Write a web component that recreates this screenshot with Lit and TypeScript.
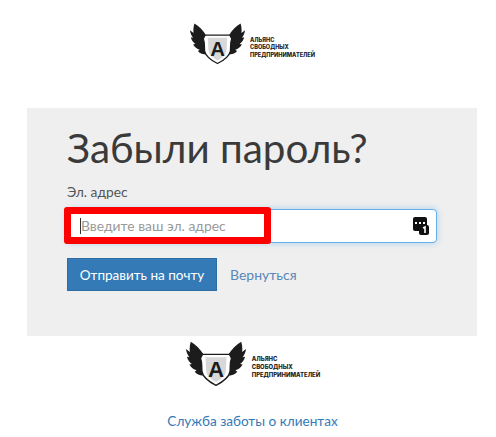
import { LitElement, html, css, svg } from "lit";
import { customElement, property } from "lit/decorators.js";

const wing = svg`
  <path d="M5 0C10 3 15 8 18 13L19 35C15 35 11 34 9 31L11 29.500C8 28.500 5 26.500 3.500 23.500L6 23C3.500 21 1.500 18.500 1 15.500L3.500 16C1.500 13.500 .3 10.500 0 7.500L4 10.500C3.500 7 4 3 5 0Z"/>
`;

@customElement("brand-logo")
class BrandLogo extends LitElement {
  @property({ type: Boolean }) small = false;
  static styles = css`
    :host { display: flex; align-items: flex-start; }
    svg { display: block; }
    .big svg { width: 60px; height: 46px; }
    .small svg { width: 55px; height: 42px; }
    .wrap { display: flex; align-items: flex-start; }
    .names { font-family: "Inter", "Liberation Sans", sans-serif; font-weight: 800; color: #222; white-space: nowrap; }
    .big .names { font-size: 5.900px; line-height: 8px; margin-left: 6px; margin-top: 14px; }
    .small .names { font-size: 5.600px; line-height: 7.300px; margin-left: 5px; margin-top: 14px; }
  `;
  render() {
    return html`<div class="wrap ${this.small ? "small" : "big"}">
      <svg viewBox="0 0 62 46">
        <g fill="#1c1c1c">
          ${wing}
          <g transform="translate(62 0) scale(-1 1)">${wing}</g>
        </g>
        <path d="M17 13H45L47 17C45 22 46 27 45.500 31C44 38 37 42 31 45C25 42 18 38 16.500 31C16 27 17 22 15 17Z" fill="#fff" stroke="#1c1c1c" stroke-width="1.400"/>
        <path d="M20 16H42C41 24 42 30 40 34C38 37 34 40 31 41.500C28 40 24 37 22 34C20 30 21 24 20 16Z" fill="#d8d8d8"/>
        <text x="31" y="36" text-anchor="middle" font-family="Liberation Sans, sans-serif" font-weight="700" font-size="23" fill="#1c1c1c">A</text>
      </svg>
      <div class="names">АЛЬЯНС<br />СВОБОДНЫХ<br />ПРЕДПРИНИМАТЕЛЕЙ</div>
    </div>`;
  }
}

@customElement("app-root")
export class AppRoot extends LitElement {
  static styles = css`
    :host { display: block; width: 496px; height: 437px; overflow: hidden; background: #fff;
      font-family: "Lato", "Liberation Sans", sans-serif; color: #333; }
    .top { display: flex; justify-content: center; padding: 23px 0 0 9px; height: 108px; box-sizing: border-box; }
    .panel { margin: 0 19px 0 27px; height: 228px; box-sizing: border-box; background: #efefef; padding: 19px 40px 0; }
    h1 { margin: 0; font-size: 40.400px; line-height: 42px; font-weight: 400; color: #3a3a3a; white-space: nowrap; }
    label { display: block; margin-top: 14px; font-size: 13.800px; line-height: 18px; color: #555; }
    .field { position: relative; margin-top: 8px; width: 370px; height: 34px; box-sizing: border-box; background: #fff;
      border: 1px solid #66afe9; border-radius: 4px; box-shadow: 0 0 6px rgba(102,175,233,.5); display: flex; align-items: center; justify-content: flex-end; padding-right: 6px; }
    .mark { position: absolute; left: -4px; top: -3px; width: 207px; height: 37px; box-sizing: border-box;
      border: 7px solid #f00; border-radius: 3px; display: flex; align-items: center; padding-left: 9px;
      font-size: 13.900px; color: #999; white-space: nowrap; }
    .caret { width: 1px; height: 16px; background: #333; }
    .actions { display: flex; align-items: center; margin-top: 15px; gap: 13px; }
    button { width: 150px; height: 33px; box-sizing: border-box; background: #337ab7; border: 1px solid #2e6da4; color: #fff;
      font: 13.500px "Lato", "Liberation Sans", sans-serif; padding: 0; }
    a { color: #5a88b8; font-size: 14px; text-decoration: none; }
    .bottom { display: flex; justify-content: center; padding: 5px 0 0 10px; }
    .care { text-align: center; margin-top: 23px; padding-left: 9px; }
    .care a { color: #337ab7; font-size: 13.600px; }
  `;
  render() {
    return html`
      <div class="top"><brand-logo small></brand-logo></div>
      <div class="panel">
        <h1>Забыли пароль?</h1>
        <label>Эл. адрес</label>
        <div class="field">
          <div class="mark"><span class="caret"></span>Введите ваш эл. адрес</div>
          <svg width="18" height="20" viewBox="0 0 18 20">
            <rect x="1" y="1" width="14" height="14" rx="2" fill="#111"/>
            <rect x="3" y="6" width="2" height="2" fill="#fff"/><rect x="7" y="6" width="2" height="2" fill="#fff"/><rect x="11" y="6" width="2" height="2" fill="#fff"/>
            <rect x="7" y="9" width="10" height="10" rx="2" fill="#111"/>
            <path d="M11 12L13 11V17" fill="none" stroke="#fff" stroke-width="1.600"/>
          </svg>
        </div>
        <div class="actions"><button>Отправить на почту</button><a href="#">Вернуться</a></div>
      </div>
      <div class="bottom"><brand-logo></brand-logo></div>
      <div class="care"><a href="#">Служба заботы о клиентах</a></div>
    `;
  }
}
